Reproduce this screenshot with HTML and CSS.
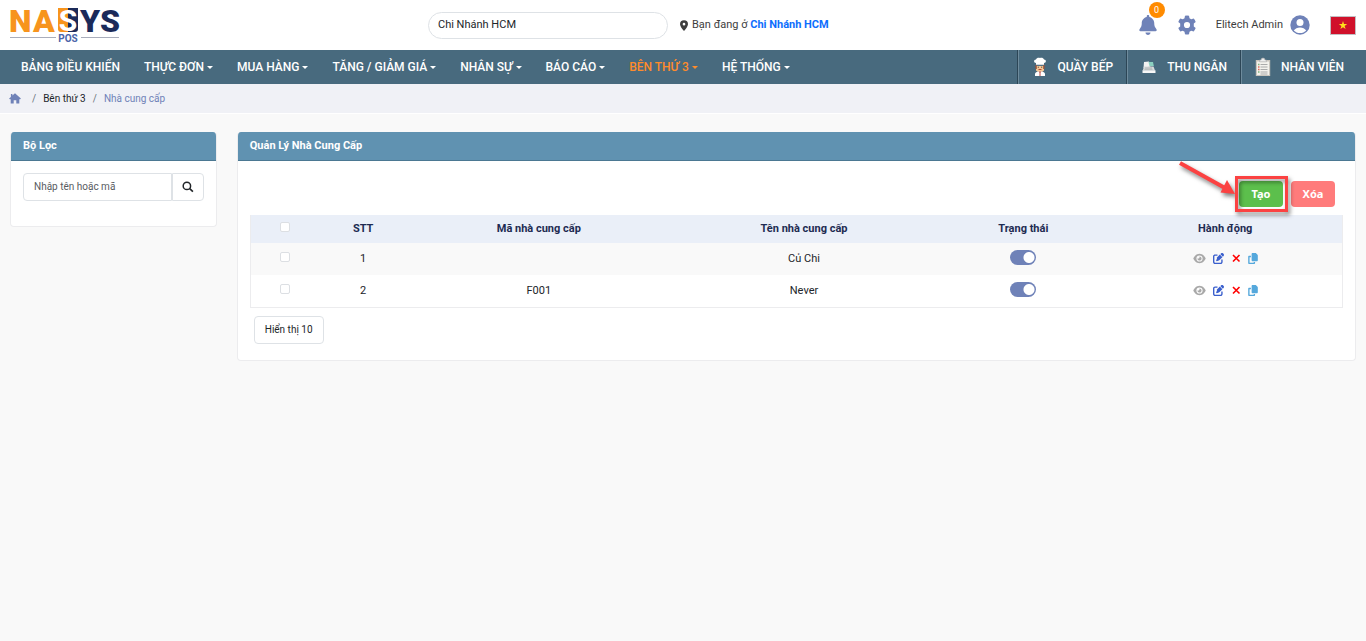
FILE: index.html
```html
<!DOCTYPE html>
<html lang="vi">
<head>
<meta charset="utf-8">
<meta name="viewport" content="width=device-width, initial-scale=1">
<title>Quản Lý Nhà Cung Cấp</title>
<link rel="stylesheet" href="styles.css">
</head>
<body>
<svg class="sprite" aria-hidden="true">
  <symbol id="i-eye" viewBox="0 0 576 512"><path d="M288 32c-81 0-146 37-193 81C48 156 17 208 3 244c-3 8-3 17 0 25 14 36 45 88 92 131 47 44 112 81 193 81s146-37 193-81c47-43 78-95 92-131 3-8 3-17 0-25-14-36-45-88-92-131-47-44-112-81-193-81zM144 256a144 144 0 1 1 288 0 144 144 0 1 1-288 0zm144-64c0 35-29 64-64 64-7 0-14-1-20-3-6-2-12 2-12 7 0 7 1 14 3 21 14 51 66 82 118 68s82-66 68-118c-11-41-47-69-87-71-6 0-9 6-8 12 2 6 2 13 2 20z"/></symbol>
  <symbol id="i-edit" viewBox="0 0 512 512"><path d="M472 22l18 18c28 28 28 73 0 101l-30 30L341 52l30-30c28-28 73-28 101 0zM172 221L319 75l118 118-147 147c-6 6-14 11-22 14l-89 29c-9 3-18 1-25-6-6-6-9-16-6-24l30-89c3-8 8-16 14-22zM96 64h112v64H96c-18 0-32 14-32 32v256c0 18 14 32 32 32h256c18 0 32-14 32-32V304h64v112c0 53-43 96-96 96H96c-53 0-96-43-96-96V160c0-53 43-96 96-96z"/></symbol>
  <symbol id="i-x" viewBox="0 0 10 10"><path d="M2 2l6.500 6.500M8.500 2l-6.500 6.500" fill="none" stroke="currentColor" stroke-width="1.600"/></symbol>
  <symbol id="i-copy" viewBox="0 0 448 512"><path d="M208 0h124c13 0 25 5 34 14l68 68c9 9 14 21 14 34v220c0 27-21 48-48 48H208c-27 0-48-21-48-48V48c0-27 21-48 48-48zM48 128h80v64H64v256h192v-32h64v48c0 27-21 48-48 48H48c-27 0-48-21-48-48V176c0-27 21-48 48-48z"/></symbol>
</svg>

<header class="topbar">
  <a class="logo" href="#" aria-label="NASYS POS">
    <svg width="112" height="38" viewBox="0 0 112 38">
      <path d="M50 2h10v24h-7q-3 0-3-3z" fill="#f7941d"/>
      <path d="M60 2h10v21q0 3-3 3h-7z" fill="#1b2a59"/>
      <g class="logo-word">
        <text x="1" y="26" fill="#f7941d">N</text>
        <text x="25" y="26" fill="#f7941d">A</text>
        <text class="logo-tile" x="60" y="25" text-anchor="middle" fill="#fff">S</text>
        <text x="72" y="26" fill="#1b2a59">Y</text>
        <text x="92" y="26" fill="#1b2a59">S</text>
      </g>
      <path d="M2 31.500h46M73 31.500h38" stroke="#a9adbb"/>
      <text class="logo-sub" x="60" y="36" text-anchor="middle">POS</text>
    </svg>
  </a>
  <div class="branch">
    <select class="branch-select" aria-label="Chi nhánh"><option>Chi Nhánh HCM</option></select>
    <p class="location">
      <svg width="8" height="11" viewBox="0 0 384 512"><path d="M216 499c51-64 168-219 168-307a192 192 0 1 0-384 0c0 88 117 243 168 307 12 16 36 16 48 0zM192 128a64 64 0 1 1 0 128 64 64 0 0 1 0-128z"/></svg>
      <span>Bạn đang ở <a href="#">Chi Nhánh HCM</a></span>
    </p>
  </div>
  <div class="account">
    <button class="icon-btn bell" aria-label="Thông báo">
      <svg width="18" height="20" viewBox="0 0 448 512"><path d="M224 0c-18 0-32 14-32 32v19C119 66 64 131 64 208v19c0 47-17 92-48 127l-8 9c-8 9-10 23-5 34s16 19 29 19h384c13 0 24-8 29-19s3-25-5-34l-8-9c-31-35-48-80-48-127v-19c0-77-55-142-128-157V32c0-18-14-32-32-32zm45 493c12-12 19-28 19-45H160c0 17 7 33 19 45s28 19 45 19 33-7 45-19z"/></svg>
      <span class="badge">0</span>
    </button>
    <button class="icon-btn gear" aria-label="Cài đặt">
      <svg width="20" height="20" viewBox="0 0 20 20"><path fill-rule="evenodd" d="M8 .8Q10 .4 12 .8L12.500 3.300 14.200 4.300 16.700 3.500Q18 5 18.700 6.900L16.800 8.600V11.400L18.700 13.100Q18 15 16.700 16.500L14.200 15.700 12.500 16.700 12 19.200Q10 19.600 8 19.200L7.500 16.700 5.800 15.700 3.300 16.500Q2 15 1.300 13.100L3.200 11.400V8.600L1.300 6.900Q2 5 3.300 3.500L5.800 4.300 7.500 3.300ZM10 6.900A3.100 3.100 0 1 0 10 13.100 3.100 3.100 0 0 0 10 6.900Z"/></svg>
    </button>
    <button class="user">
      <span>Elitech Admin</span>
      <svg width="20" height="20" viewBox="0 0 20 20"><circle cx="10" cy="10" r="9.700"/><circle cx="10" cy="7.600" r="3.500" fill="#fff"/><path d="M3.800 15.400C5.200 13.300 7.400 12.400 10 12.400S14.800 13.300 16.200 15.400C14.600 17.100 12.400 18 10 18S5.400 17.100 3.800 15.400Z" fill="#fff"/></svg>
    </button>
    <button class="flag" aria-label="Tiếng Việt">
      <svg width="26" height="19" viewBox="0 0 26 19"><rect x=".5" y=".5" width="25" height="18" fill="#d0112b" stroke="#c3bfc3"/><path d="M13 5l1 3.100h3.200l-2.600 1.900 1 3.100-2.600-1.900-2.600 1.900 1-3.100-2.600-1.900H12z" fill="#ffde1c"/></svg>
    </button>
  </div>
</header>

<nav class="mainnav">
  <div class="menu">
    <a href="#">BẢNG ĐIỀU KHIỂN</a>
    <a class="drop" href="#">THỰC ĐƠN</a>
    <a class="drop" href="#">MUA HÀNG</a>
    <a class="drop" href="#">TĂNG / GIẢM GIÁ</a>
    <a class="drop" href="#">NHÂN SỰ</a>
    <a class="drop" href="#">BÁO CÁO</a>
    <a class="drop active" href="#">BÊN THỨ 3</a>
    <a class="drop" href="#">HỆ THỐNG</a>
  </div>
  <div class="shortcuts">
    <a href="#">
      <svg width="16" height="20" viewBox="0 0 16 20"><path d="M4 9h8v4.500L10 15H6l-2-1.500z" fill="#f3c795"/><path d="M3.500 8h1.300v4H3.500zM11.200 8h1.300v4h-1.300z" fill="#9b4f35"/><path d="M4 8V6C1.500 5.800 1.400 2.700 4 2.500 4.500.6 7 .2 8 1.100c1-.9 3.500-.5 4 1.400 2.600.2 2.500 3.300 0 3.500v2z" fill="#fff"/><path d="M4 7.600h8" stroke="#cfd3d8"/><path d="M6.300 9.700v1M9.700 9.700v1" stroke="#4d3028"/><path d="M6.500 12.500h3" stroke="#b54b35"/><path d="M3 19v-2c0-1.600 2-2.300 3.500-2.500h3c1.500.2 3.500.9 3.500 2.500v2z" fill="#fff"/><path d="M6.500 14.500L8 16.300l1.500-1.800zM7.500 16h1v3h-1z" fill="#b6423a"/></svg>
      <span>QUẦY BẾP</span>
    </a>
    <a href="#">
      <svg width="16" height="14" viewBox="0 0 14 14"><path d="M2 2l5-.5 1.500 5L1.500 8z" fill="#f2f2f2"/><path d="M6.500 2h4.500l.8 4H7.500z" fill="#8bd1c0"/><path d="M2 6.500h9.500l1.500 4H.7z" fill="#d9dcdc"/><path d="M.5 10.300h13v2.700H.5z" fill="#f7f7f7"/><path d="M3 8h7M2.500 9.300h8" stroke="#9b9fa1" stroke-width=".6"/></svg>
      <span>THU NGÂN</span>
    </a>
    <a href="#">
      <svg width="16" height="20" viewBox="0 0 16 20"><rect x=".8" y="3" width="14.400" height="16" fill="#c9c5bd"/><rect x="2" y="4.500" width="12" height="13.500" fill="#f4f2ed"/><path d="M4.500 4.800V3H6a2 2 0 0 1 4 0h1.500v1.800z" fill="#eee" stroke="#aaa" stroke-width=".6"/><path d="M5.500 7.500h7M5.500 10h7M5.500 12.500h7M5.500 15h7M5.500 17h7" stroke="#aaa"/><path d="M3 7.500h1.500M3 15h1.500" stroke="#7fb27b" stroke-width="1.300"/><path d="M3 10h1.500M3 12.500h1.500" stroke="#dc6b5b" stroke-width="1.300"/></svg>
      <span>NHÂN VIÊN</span>
    </a>
  </div>
</nav>

<ol class="breadcrumb">
  <li><a class="home" href="#" aria-label="Trang chủ"><svg width="12" height="11" viewBox="0 0 12 11"><path d="M6 .2L11.900 5.500 11.200 6.200H10.300V10.600H7.300V7.300H4.700V10.600H1.700V6.200H.8L.1 5.500 1.900 3.900V1H3.400V2.500Z"/></svg></a></li>
  <li><a href="#">Bên thứ 3</a></li>
  <li class="current">Nhà cung cấp</li>
</ol>

<main class="layout">
  <aside class="col">
    <section class="card">
      <h2>Bộ Lọc</h2>
      <form class="filter">
        <input type="text" placeholder="Nhập tên hoặc mã" aria-label="Nhập tên hoặc mã">
        <button type="button" aria-label="Tìm kiếm"><svg width="12" height="12" viewBox="0 0 12 12"><circle cx="4.900" cy="4.900" r="3.700" fill="none" stroke="#212529" stroke-width="1.500"/><path d="M7.700 7.700l3.200 3" stroke="#212529" stroke-width="1.700"/></svg></button>
      </form>
    </section>
  </aside>
  <div class="col">
    <section class="card">
      <h2>Quản Lý Nhà Cung Cấp</h2>
      <div class="panel">
        <div class="actions">
          <div class="create">
            <button class="btn green">Tạo</button>
            <svg class="pointer" width="126" height="66" viewBox="0 0 126 66" aria-hidden="true">
              <g fill="none" stroke="#fb4242"><rect x="66.500" y="22.500" width="50" height="33" stroke-width="3"/><path d="M10 8l45 25" stroke-width="4"/></g>
              <path d="M65 39l-14.500-1.500 6.500-12.500z" fill="#fb4242"/>
            </svg>
          </div>
          <button class="btn red">Xóa</button>
        </div>
        <table>
          <colgroup><col class="c-check"><col class="c-no"><col class="c-code"><col class="c-name"><col class="c-state"><col></colgroup>
          <thead>
            <tr><th><input class="tick" type="checkbox" aria-label="Chọn tất cả"></th><th>STT</th><th>Mã nhà cung cấp</th><th>Tên nhà cung cấp</th><th>Trạng thái</th><th>Hành động</th></tr>
          </thead>
          <tbody>
            <tr>
              <td><input class="tick" type="checkbox" aria-label="Chọn Củ Chi"></td><td>1</td><td></td><td>Củ Chi</td>
              <td><input class="switch" type="checkbox" role="switch" checked aria-label="Trạng thái Củ Chi"></td>
              <td><div class="ops">
                <button class="view" aria-label="Xem"><svg width="13" height="11"><use href="#i-eye"/></svg></button>
                <button class="edit" aria-label="Sửa"><svg width="11" height="11"><use href="#i-edit"/></svg></button>
                <button class="remove" aria-label="Xóa"><svg width="10" height="10"><use href="#i-x"/></svg></button>
                <button class="copy" aria-label="Sao chép"><svg width="10" height="11"><use href="#i-copy"/></svg></button>
              </div></td>
            </tr>
            <tr>
              <td><input class="tick" type="checkbox" aria-label="Chọn Never"></td><td>2</td><td>F001</td><td>Never</td>
              <td><input class="switch" type="checkbox" role="switch" checked aria-label="Trạng thái Never"></td>
              <td><div class="ops">
                <button class="view" aria-label="Xem"><svg width="13" height="11"><use href="#i-eye"/></svg></button>
                <button class="edit" aria-label="Sửa"><svg width="11" height="11"><use href="#i-edit"/></svg></button>
                <button class="remove" aria-label="Xóa"><svg width="10" height="10"><use href="#i-x"/></svg></button>
                <button class="copy" aria-label="Sao chép"><svg width="10" height="11"><use href="#i-copy"/></svg></button>
              </div></td>
            </tr>
          </tbody>
        </table>
        <button class="page-size">Hiển thị 10</button>
      </div>
    </section>
  </div>
</main>
</body>
</html>
```

FILE: styles.css
```css
* { box-sizing: border-box; }

body {
  margin: 0;
  background: #f9f9f9;
  color: #212529;
  font: 11px/16px Roboto, "Noto Sans", sans-serif;
}

a { color: inherit; text-decoration: none; }
button, input, select { font: inherit; color: inherit; }
button { padding: 0; border: 0; background: none; cursor: pointer; }
svg { display: block; flex: none; }
.sprite { position: absolute; width: 0; height: 0; }

/* Top bar */
.topbar {
  display: flex;
  align-items: center;
  height: 50px;
  padding: 0 10px 0 8px;
  background: #fff;
}
.logo svg { overflow: visible; }
.logo-word { font: 900 32px Roboto, sans-serif; }
.logo-tile { font-size: 30px; font-weight: 700; }
.logo-sub { font: 700 10px Roboto, sans-serif; fill: #4a64a8; }
.branch { display: flex; align-items: center; gap: 12px; margin-left: 308px; }
.branch-select {
  width: 240px;
  height: 27px;
  padding: 0 9px;
  border: 1px solid #dee2e6;
  border-radius: 14px;
  background: #fff;
  appearance: none;
}
.location { display: flex; align-items: center; gap: 4px; margin: 0; color: #3d3d3d; }
.location svg { fill: currentColor; }
.location a { color: #0d6efd; font-weight: 700; }
.account { display: flex; align-items: center; margin-left: auto; color: #6f82b8; }
.account svg { fill: currentColor; }
.icon-btn { position: relative; }
.bell { margin-right: 20px; }
.badge {
  position: absolute;
  top: -13px;
  right: -8px;
  width: 16px;
  height: 16px;
  border-radius: 50%;
  background: #ff8b00;
  color: #fff;
  font-size: 9px;
  line-height: 16px;
}
.gear { margin-right: 19px; }
.user { display: flex; align-items: center; gap: 7px; margin-right: 20px; }
.user span { color: #3d3d3d; }

/* Main navigation */
.mainnav {
  display: flex;
  justify-content: space-between;
  height: 34px;
  padding-left: 9px;
  background: #486a7e;
  color: #fff;
  font-size: 12px;
  font-weight: 500;
  white-space: nowrap;
}
.menu, .shortcuts { display: flex; }
.menu a { display: flex; align-items: center; padding: 0 12px; }
.drop::after {
  content: "";
  margin-left: 3px;
  border: 3px solid transparent;
  border-top-color: currentColor;
  border-bottom: 0;
}
.menu .active { color: #ff8b2b; }
.shortcuts a {
  display: flex;
  align-items: center;
  gap: 10px;
  padding: 0 13px 0 14px;
  border-left: 1px solid #2c4656;
  box-shadow: inset 1px 0 #6e8b9c;
}
.shortcuts a:last-child { padding-right: 22px; }

/* Breadcrumb */
.breadcrumb {
  display: flex;
  align-items: center;
  height: 30px;
  margin: 0;
  padding: 0 9px;
  border-bottom: 1px solid #fff;
  background: #f0f1f6;
  font-size: 10px;
  list-style: none;
}
.breadcrumb li { display: flex; align-items: center; }
.breadcrumb li + li::before { content: "/"; padding: 0 7px; color: #6c757d; }
.breadcrumb .current { color: #6f82b8; }
.home { margin-right: 4px; }
.home svg { fill: #6f82b8; }

/* Page layout */
.layout { display: grid; grid-template-columns: 16.6% 1fr; align-items: start; padding-top: 18px; }
.col { min-width: 0; padding: 0 10px; }
.card {
  overflow: hidden;
  border: 1px solid #ececee;
  border-top: 0;
  border-radius: 4px;
  background: #fff;
}
.card h2 {
  margin: 0;
  padding: 6px 12px;
  border-bottom: 1px solid #4b7892;
  background: #6092b1;
  color: #fff;
  font-size: 11px;
  line-height: 16px;
  font-weight: 700;
}
.filter { display: flex; height: 65px; padding: 12px 12px 25px; }
.filter input {
  flex: 1;
  min-width: 0;
  padding: 0 10px;
  border: 1px solid #dee2e6;
  border-radius: 4px 0 0 4px;
  outline: 0;
  font-size: 10px;
}
.filter input::placeholder { color: #595c5f; opacity: 1; }
.filter button {
  display: grid;
  place-items: center;
  width: 32px;
  border: 1px solid #dee2e6;
  border-radius: 0 4px 4px 0;
}
.panel { padding: 20px 12px 16px; }

.actions { display: flex; justify-content: flex-end; gap: 8px; padding: 0 8px 8px 0; }
.create { position: relative; }
.btn {
  display: block;
  width: 44px;
  height: 26px;
  border-radius: 4px;
  color: #fff;
  font-family: "Noto Sans", sans-serif;
  font-weight: 700;
}
.green { background: #5cbf4c; }
.red { background: #ff7b7b; }
.pointer {
  position: absolute;
  top: -26px;
  right: -13px;
  pointer-events: none;
  filter: drop-shadow(2px 3px 2px rgba(0, 0, 0, .5));
}

/* Supplier table */
table {
  width: 100%;
  border: 1px solid #ececee;
  border-top: 0;
  border-spacing: 0;
  table-layout: fixed;
  text-align: center;
}
.c-check { width: 6.2%; }
.c-no { width: 8.2%; }
.c-code { width: 24%; }
.c-name { width: 24.6%; }
.c-state { width: 15.6%; }
th, td { height: 32px; padding: 0; }
th { height: 28px; background: #eaeff8; color: #1e2b52; font-weight: 700; }
tbody tr:first-child { background: #f9f9f9; }
tbody tr:last-child { background: #fff; }
.tick {
  display: block;
  width: 10px;
  height: 10px;
  margin: 0 auto 4px;
  border: 1px solid #dcdfe3;
  border-radius: 2px;
  background: #fff;
  appearance: none;
}
.switch {
  display: block;
  width: 26px;
  height: 15px;
  margin: 0 auto 4px;
  border-radius: 8px;
  background: radial-gradient(circle at 19px 50%, #fff 5px, #6f82b8 6px);
  appearance: none;
}
.ops { display: flex; justify-content: center; align-items: center; gap: 7px; margin-bottom: 2px; }
.ops svg { fill: currentColor; }
.view { color: #a9a9a9; }
.edit { color: #3a5fcd; }
.remove { color: #f00; }
.copy { color: #55a8dc; }

.page-size {
  height: 28px;
  margin: 8px 4px 0;
  padding: 0 10px;
  border: 1px solid #dee2e6;
  border-radius: 4px;
  background: #fff;
  font-size: 10px;
}
```
